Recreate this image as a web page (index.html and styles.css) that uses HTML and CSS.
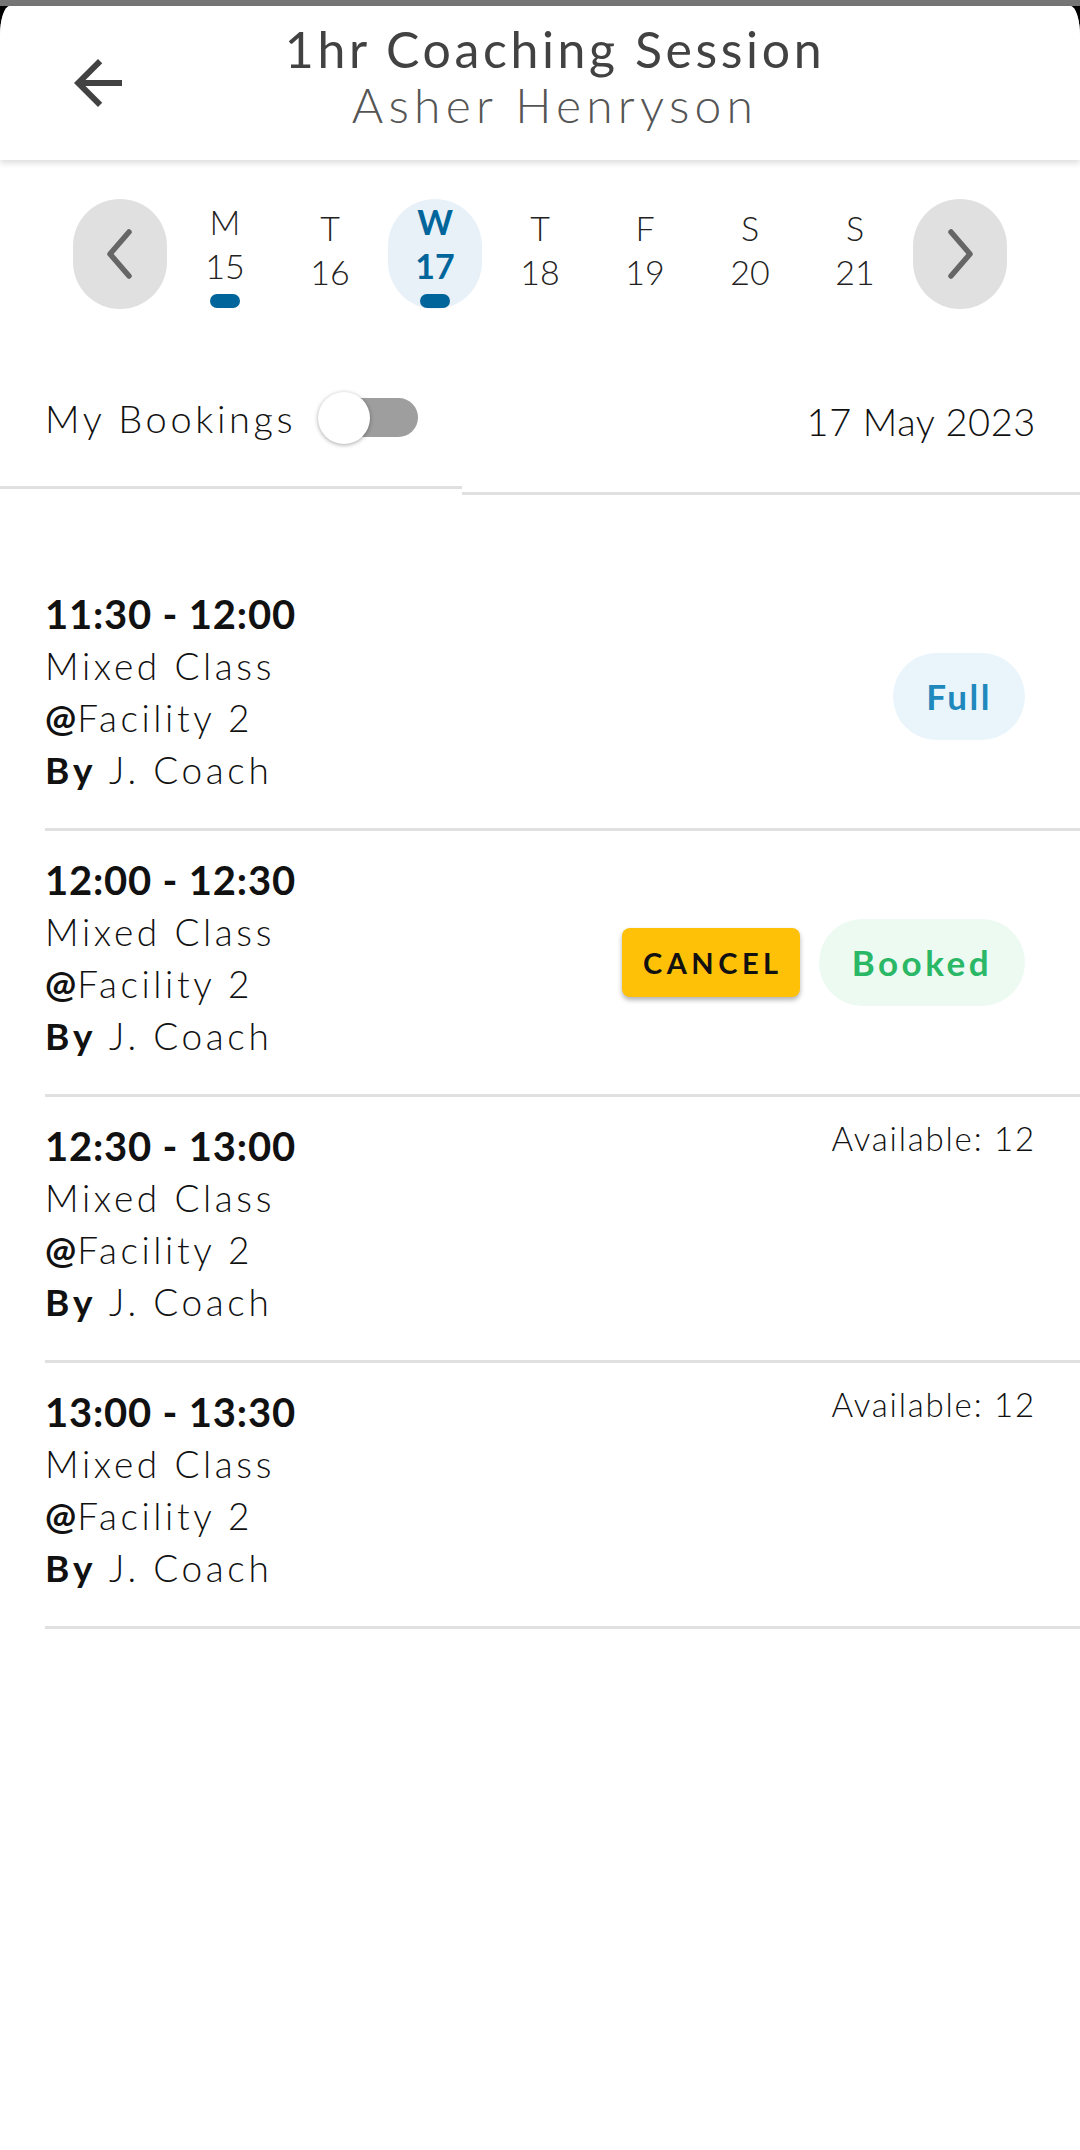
FILE: index.html
```html
<!DOCTYPE html>
<html lang="en">
<head>
<meta charset="utf-8">
<title>1hr Coaching Session</title>
<link rel="stylesheet" href="styles.css">
</head>
<body>
<div class="status"></div>
<div class="frame">
  <div class="page">
    <header class="appbar">
      <button class="back" aria-label="Back">
        <svg viewBox="0 0 24 24"><path d="M20 11H7.83l5.59-5.59L12 4l-8 8 8 8 1.41-1.41L7.83 13H20v-2z"/></svg>
      </button>
      <div class="titles">
        <h1>1hr Coaching Session</h1>
        <h2>Asher Henryson</h2>
      </div>
    </header>

    <nav class="week">
      <button class="nav-btn" aria-label="Previous week">
        <svg viewBox="0 0 88 88"><polyline points="53,22 34,44 53,66"/></svg>
      </button>
      <div class="day marked"><span class="dow">M</span><span class="num">15</span><span class="dot"></span></div>
      <div class="day"><span class="dow">T</span><span class="num">16</span></div>
      <div class="day marked selected"><span class="dow">W</span><span class="num">17</span><span class="dot"></span></div>
      <div class="day"><span class="dow">T</span><span class="num">18</span></div>
      <div class="day"><span class="dow">F</span><span class="num">19</span></div>
      <div class="day"><span class="dow">S</span><span class="num">20</span></div>
      <div class="day"><span class="dow">S</span><span class="num">21</span></div>
      <button class="nav-btn" aria-label="Next week">
        <svg viewBox="0 0 88 88"><polyline points="35,22 54,44 35,66"/></svg>
      </button>
    </nav>

    <section class="filter">
      <div class="filter-left">
        <span class="filter-label">My Bookings</span>
        <span class="switch"><span class="track"></span><span class="thumb"></span></span>
      </div>
      <div class="filter-right">17 May 2023</div>
    </section>

    <ul class="slots">
      <li class="slot">
        <div class="info">
          <div class="time">11:30 - 12:00</div>
          <div>Mixed Class</div>
          <div><b>@</b>Facility 2</div>
          <div><b class="by">By</b> J. Coach</div>
        </div>
        <div class="actions">
          <span class="badge full">Full</span>
        </div>
      </li>
      <li class="slot">
        <div class="info">
          <div class="time">12:00 - 12:30</div>
          <div>Mixed Class</div>
          <div><b>@</b>Facility 2</div>
          <div><b class="by">By</b> J. Coach</div>
        </div>
        <div class="actions">
          <button class="cancel">CANCEL</button>
          <span class="badge booked">Booked</span>
        </div>
      </li>
      <li class="slot">
        <div class="info">
          <div class="time">12:30 - 13:00</div>
          <div>Mixed Class</div>
          <div><b>@</b>Facility 2</div>
          <div><b class="by">By</b> J. Coach</div>
        </div>
        <div class="available">Available: 12</div>
      </li>
      <li class="slot">
        <div class="info">
          <div class="time">13:00 - 13:30</div>
          <div>Mixed Class</div>
          <div><b>@</b>Facility 2</div>
          <div><b class="by">By</b> J. Coach</div>
        </div>
        <div class="available">Available: 12</div>
      </li>
    </ul>
  </div>
</div>
</body>
</html>
```

FILE: styles.css
```css
* { box-sizing: border-box; }

html, body {
  margin: 0;
  padding: 0;
  background: #fff;
}

body {
  font-family: Lato, "Noto Sans", sans-serif;
  color: #111;
}

button {
  font-family: inherit;
  border: 0;
  padding: 0;
  background: none;
  cursor: pointer;
}

.status {
  height: 6px;
  background: #757575;
}

.frame {
  background: #000;
}

.page {
  background: #fff;
  border-radius: 10px 10px 0 0 / 30px 30px 0 0;
  min-height: 2144px;
}

/* App bar */
.appbar {
  height: 154px;
  display: flex;
  align-items: center;
  background: #fff;
  border-radius: 10px 10px 0 0 / 30px 30px 0 0;
  box-shadow: 0 3px 6px rgba(0, 0, 0, 0.14);
  position: relative;
}

.back {
  width: 72px;
  height: 72px;
  margin-left: 62px;
  display: flex;
}

.back svg {
  width: 72px;
  height: 72px;
  fill: #424242;
}

.titles {
  flex: 1;
  text-align: center;
  padding-right: 104px;
  padding-bottom: 12px;
}

.titles h1 {
  margin: 0;
  font-size: 50px;
  line-height: 56px;
  font-weight: 400;
  letter-spacing: 3.6px;
  color: #424242;
}

.titles h2 {
  margin: 0;
  font-size: 48px;
  line-height: 56px;
  font-weight: 300;
  letter-spacing: 5.2px;
  color: #555;
}

/* Week strip */
.week {
  margin-top: 39px;
  display: flex;
  justify-content: center;
  gap: 11px;
}

.nav-btn {
  width: 94px;
  height: 110px;
  border-radius: 47px;
  background: #e0e0e0;
  display: flex;
  align-items: center;
  justify-content: center;
}

.nav-btn svg {
  width: 88px;
  height: 88px;
  fill: none;
  stroke: #666;
  stroke-width: 5.5;
  stroke-linecap: round;
  stroke-linejoin: round;
}

.day {
  width: 94px;
  height: 110px;
  border-radius: 47px;
  display: flex;
  flex-direction: column;
  align-items: center;
  justify-content: center;
  padding-bottom: 8px;
  font-size: 34px;
  font-weight: 300;
  color: #222;
}

.day.marked {
  padding-bottom: 0;
}

.dow, .num {
  line-height: 44px;
}

.dot {
  width: 30px;
  height: 14px;
  border-radius: 7px;
  background: #00659b;
  margin-top: 6px;
}

.day.selected {
  background: #e9f1f8;
  color: #00659b;
  font-weight: 700;
}

/* Filter row */
.filter {
  margin-top: 40px;
  display: grid;
  grid-template-columns: 462px 1fr;
  align-items: start;
}

.filter-left {
  height: 140px;
  border-bottom: 3px solid #e0e0e0;
  display: flex;
  align-items: center;
  padding-left: 45px;
}

.filter-right {
  height: 146px;
  border-bottom: 3px solid #e0e0e0;
  display: flex;
  align-items: center;
  justify-content: flex-end;
  padding-right: 44px;
  font-size: 38px;
  font-weight: 300;
  letter-spacing: 0.6px;
}

.filter-label {
  font-size: 38px;
  font-weight: 300;
  letter-spacing: 3.6px;
}

.switch {
  position: relative;
  width: 100px;
  height: 52px;
  margin-left: 22px;
}

.track {
  position: absolute;
  left: 5px;
  top: 6px;
  width: 95px;
  height: 39px;
  border-radius: 20px;
  background: #9e9e9e;
}

.thumb {
  position: absolute;
  left: 0;
  top: 0;
  width: 52px;
  height: 52px;
  border-radius: 50%;
  background: #fff;
  box-shadow: 0 1px 4px rgba(0, 0, 0, 0.35);
}

/* Slots */
.slots {
  list-style: none;
  margin: 0;
  padding: 70px 0 0 45px;
}

.slot {
  display: flex;
  padding: 23px 44px 32px 0;
  border-bottom: 3px solid #e0e0e0;
}

.info {
  flex: 1;
  font-size: 37px;
  line-height: 52px;
  font-weight: 300;
  letter-spacing: 3.6px;
}

.info b {
  font-weight: 700;
  letter-spacing: 1px;
}

.info b.by {
  letter-spacing: 4px;
}

.time {
  font-size: 40px;
  font-weight: 700;
  letter-spacing: 0.8px;
}

.actions {
  align-self: center;
  margin-top: 8px;
  margin-right: 11px;
  display: flex;
  align-items: center;
}

.badge {
  height: 87px;
  padding: 0 33px;
  border-radius: 44px;
  display: flex;
  align-items: center;
  font-size: 35px;
  font-weight: 700;
  letter-spacing: 2.5px;
}

.badge.full {
  background: #eaf5fb;
  color: #1f88bd;
}

.badge.booked {
  background: #ecfaf2;
  color: #2bb866;
  letter-spacing: 3.5px;
}

.cancel {
  height: 69px;
  padding: 0 17px 0 21px;
  margin-right: 19px;
  border-radius: 8px;
  background: #ffc107;
  color: #111;
  font-size: 29px;
  font-weight: 700;
  letter-spacing: 4.5px;
  box-shadow: 0 3px 5px rgba(0, 0, 0, 0.3);
}

.available {
  align-self: flex-start;
  font-size: 33px;
  line-height: 36px;
  font-weight: 300;
  letter-spacing: 1.8px;
}
```
